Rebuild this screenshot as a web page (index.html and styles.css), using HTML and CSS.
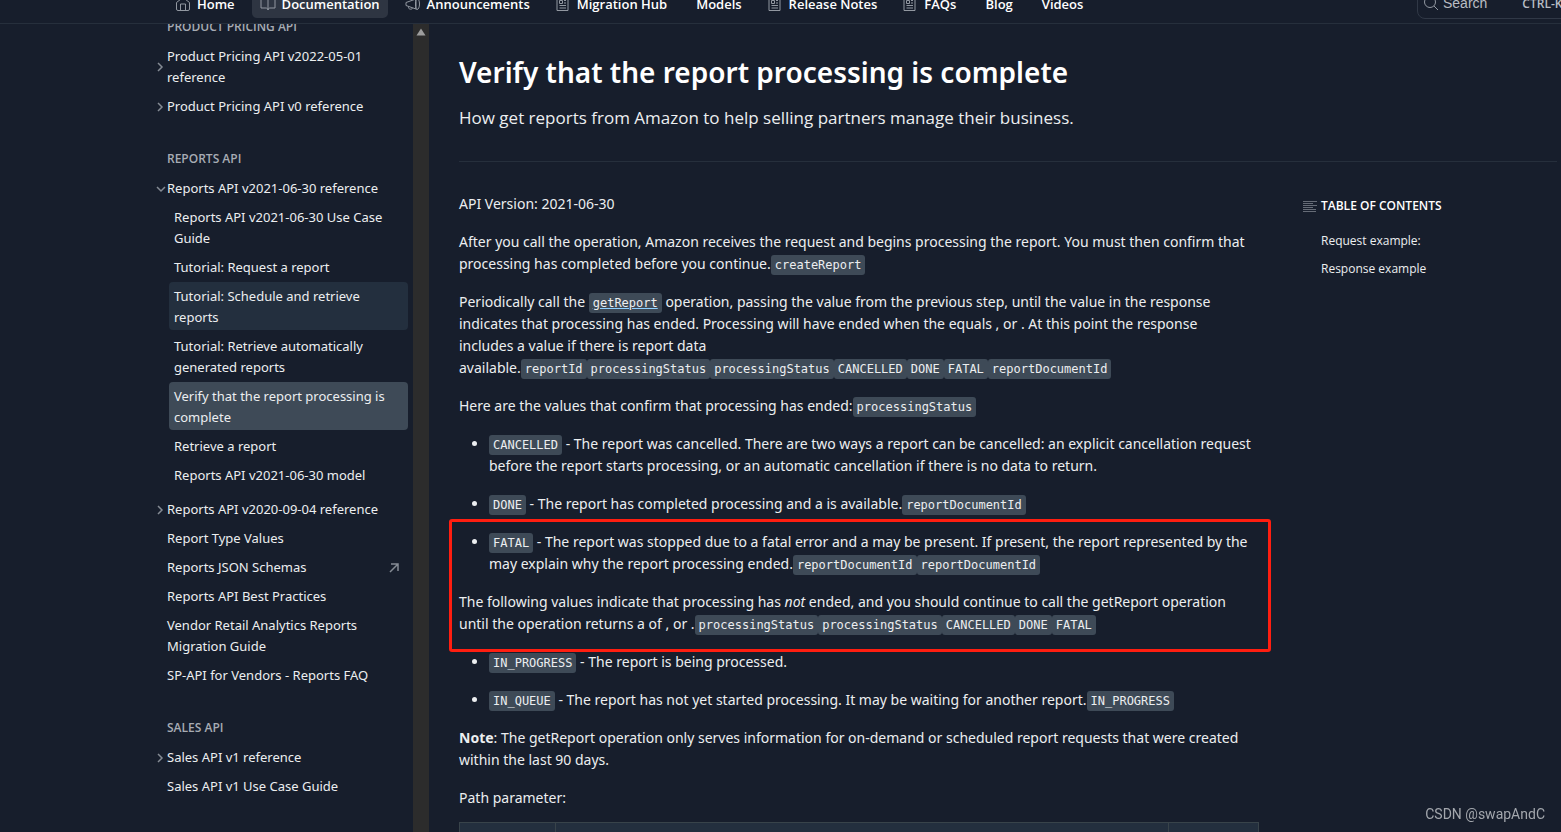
FILE: index.html
```html
<!DOCTYPE html>
<html lang="en">
<head>
<meta charset="utf-8">
<title>Verify that the report processing is complete</title>
<link rel="stylesheet" href="styles.css">
</head>
<body>
<svg class="sprite" aria-hidden="true">
  <symbol id="i-home" viewBox="0 0 16 16"><path d="M1.500 6.500 8 1.500l6.500 5V13a1.500 1.500 0 0 1-1.500 1.500H3A1.500 1.500 0 0 1 1.500 13zM5.500 14.500V8h5v6.500"/></symbol>
  <symbol id="i-book" viewBox="0 0 16 16"><path d="M8 3.500C8 2.500 7 1.500 5.500 1.500H1v10.500h5c1 0 2 .8 2 2 0-1.200 1-2 2-2h5V1.500h-4.500C9 1.500 8 2.500 8 3.500zM8 3.500V14"/></symbol>
  <symbol id="i-horn" viewBox="0 0 16 16"><path d="M1 6.500 11 3v10L1 9.500zM3.500 10.500v1.200c0 1.500 3.500 2.300 4 .3M12 2.500c1.500 0 2.500 2.500 2.500 5.500s-1 5.500-2.500 5.500-1.500-2-1.500-5.500S10.500 2.500 12 2.500z"/></symbol>
  <symbol id="i-doc" viewBox="0 0 16 16"><path d="M2 1.500h11v13H2zM4.500 4.500h3v3h-3zM9 4.500h2M9 7h2M4.500 9.500H11M4.500 12H11"/></symbol>
  <symbol id="i-search" viewBox="0 0 16 16"><circle cx="7" cy="7" r="5.500"/><path d="m11 11 4 4"/></symbol>
  <symbol id="i-right" viewBox="0 0 12 12"><path d="m3 2 4 4-4 4"/></symbol>
  <symbol id="i-down" viewBox="0 0 12 12"><path d="m2 4 4 4 4-4"/></symbol>
  <symbol id="i-out" viewBox="0 0 12 12"><path d="M3 2h7v7M10 2 2 10"/></symbol>
  <symbol id="i-lines" viewBox="0 0 14 12"><path d="M0 1.500h14M0 3.500h10M0 5.500h14M0 7.500h10M0 9.500h13M0 11.500h13"/></symbol>
</svg>

<header class="topbar">
  <nav class="topnav">
    <a class="tab" href="#"><svg class="icon"><use href="#i-home"/></svg>Home</a>
    <a class="tab tab-active" href="#"><svg class="icon"><use href="#i-book"/></svg>Documentation</a>
    <a class="tab" href="#"><svg class="icon"><use href="#i-horn"/></svg>Announcements</a>
    <a class="tab" href="#"><svg class="icon"><use href="#i-doc"/></svg>Migration Hub</a>
    <a class="tab tab-plain" href="#">Models</a>
    <a class="tab" href="#"><svg class="icon"><use href="#i-doc"/></svg>Release Notes</a>
    <a class="tab" href="#"><svg class="icon"><use href="#i-doc"/></svg>FAQs</a>
    <a class="tab tab-plain" href="#">Blog</a>
    <a class="tab tab-plain" href="#">Videos</a>
  </nav>
  <button class="search" type="button"><svg class="icon"><use href="#i-search"/></svg><span>Search</span><kbd class="keys">CTRL-K</kbd></button>
</header>

<div class="page">
  <aside class="sidebar">
    <nav class="tree">
      <h2 class="group">Product Pricing API</h2>
      <ul class="list">
        <li><a class="item" href="#"><svg class="chevron"><use href="#i-right"/></svg><span>Product Pricing API v2022-05-01 reference</span></a></li>
        <li><a class="item" href="#"><svg class="chevron"><use href="#i-right"/></svg><span>Product Pricing API v0 reference</span></a></li>
      </ul>
      <h2 class="group">Reports API</h2>
      <ul class="list">
        <li><a class="item" href="#"><svg class="chevron"><use href="#i-down"/></svg><span>Reports API v2021-06-30 reference</span></a>
          <ul class="sublist">
            <li><a class="subitem" href="#">Reports API v2021-06-30 Use Case Guide</a></li>
            <li><a class="subitem" href="#">Tutorial: Request a report</a></li>
            <li><a class="subitem subitem-hover" href="#">Tutorial: Schedule and retrieve reports</a></li>
            <li><a class="subitem" href="#">Tutorial: Retrieve automatically generated reports</a></li>
            <li><a class="subitem subitem-active" href="#">Verify that the report processing is complete</a></li>
            <li><a class="subitem" href="#">Retrieve a report</a></li>
            <li><a class="subitem" href="#">Reports API v2021-06-30 model</a></li>
          </ul>
        </li>
        <li><a class="item" href="#"><svg class="chevron"><use href="#i-right"/></svg><span>Reports API v2020-09-04 reference</span></a></li>
        <li><a class="item leaf" href="#">Report Type Values</a></li>
        <li><a class="item leaf" href="#">Reports JSON Schemas<svg class="external"><use href="#i-out"/></svg></a></li>
        <li><a class="item leaf" href="#">Reports API Best Practices</a></li>
        <li><a class="item leaf" href="#">Vendor Retail Analytics Reports Migration Guide</a></li>
        <li><a class="item leaf" href="#">SP-API for Vendors - Reports FAQ</a></li>
      </ul>
      <h2 class="group">Sales API</h2>
      <ul class="list">
        <li><a class="item" href="#"><svg class="chevron"><use href="#i-right"/></svg><span>Sales API v1 reference</span></a></li>
        <li><a class="item leaf" href="#">Sales API v1 Use Case Guide</a></li>
      </ul>
    </nav>
    <div class="scrollbar"><svg class="arrow" viewBox="0 0 10 8"><path d="M5 0.500 9.500 7.500H.5z"/></svg></div>
  </aside>

  <main class="main">
    <header class="intro">
      <h1 class="title">Verify that the report processing is complete</h1>
      <p class="lead">How get reports from Amazon to help selling partners manage their business.</p>
    </header>
    <div class="columns">
      <article class="article">
        <p>API Version: 2021-06-30</p>
        <p>After you call the operation, Amazon receives the request and begins processing the report. You must then confirm that processing has completed before you continue.<code>createReport</code></p>
        <p>Periodically call the <a class="ref" href="#"><code>getReport</code></a> operation, passing the value from the previous step, until the value in the response indicates that processing has ended. Processing will have ended when the equals , or . At this point the response<br>includes a value if there is report data <span class="run">available.<code>reportId</code><code>processingStatus</code><code>processingStatus</code><code>CANCELLED</code><code>DONE</code><code>FATAL</code><code>reportDocumentId</code></span></p>
        <p>Here are the values that confirm that processing has ended:<code>processingStatus</code></p>
        <ul class="bullets">
          <li><code>CANCELLED</code> - The report was cancelled. There are two ways a report can be cancelled: an explicit cancellation request before the report starts processing, or an automatic cancellation if there is no data to return.</li>
          <li><code>DONE</code> - The report has completed processing and a is available.<code>reportDocumentId</code></li>
        </ul>
        <div class="marked">
          <ul class="bullets">
            <li><code>FATAL</code> - The report was stopped due to a fatal error and a may be present. If present, the report represented by the may explain why the report processing ended.<code>reportDocumentId</code><code>reportDocumentId</code></li>
          </ul>
          <p>The following values indicate that processing has <em>not</em> ended, and you should continue to call the getReport operation<br>until the operation returns a of , or .<code>processingStatus</code><code>processingStatus</code><code>CANCELLED</code><code>DONE</code><code>FATAL</code></p>
        </div>
        <ul class="bullets">
          <li><code>IN_PROGRESS</code> - The report is being processed.</li>
          <li><code>IN_QUEUE</code> - The report has not yet started processing. It may be waiting for another report.<code>IN_PROGRESS</code></li>
        </ul>
        <p><strong>Note</strong>: The getReport operation only serves information for on-demand or scheduled report requests that were created within the last 90 days.</p>
        <p>Path parameter:</p>
        <table class="params">
          <thead><tr><th class="narrow"></th><th></th><th class="narrow"></th></tr></thead>
        </table>
      </article>
      <nav class="toc">
        <h2 class="toc-title"><svg class="lines"><use href="#i-lines"/></svg>Table of Contents</h2>
        <a class="toc-link" href="#">Request example:</a>
        <a class="toc-link" href="#">Response example</a>
      </nav>
    </div>
  </main>
</div>
<div class="credit">CSDN @swapAndC</div>
</body>
</html>
```
FILE: styles.css
```css
* { box-sizing: border-box; }

body {
  margin: 0;
  height: 100vh;
  overflow: hidden;
  display: flex;
  flex-direction: column;
  background: #171e2c;
  color: #eceef0;
  font-family: "Noto Sans", "Open Sans", sans-serif;
  font-size: 14px;
  line-height: 22px;
}

a { color: inherit; text-decoration: none; }
ul { list-style: none; margin: 0; padding: 0; }
h1, h2, p { margin: 0; }

svg { fill: none; stroke: currentColor; flex: none; }
.sprite { position: absolute; width: 0; height: 0; }

.topbar {
  display: flex;
  align-items: flex-end;
  justify-content: space-between;
  flex: none;
  height: 24px;
  overflow: hidden;
  padding-left: 167px;
  border-bottom: 1px solid #262f3c;
  font-family: "Open Sans", sans-serif;
  white-space: nowrap;
}

.topnav { display: flex; gap: 9px; padding-bottom: 5px; }

.tab {
  display: flex;
  align-items: center;
  gap: 6px;
  height: 28px;
  padding: 0 8px;
  border-radius: 5px;
  color: #fff;
  font-size: 13px;
  font-weight: 600;
}
.tab-plain { padding-left: 12px; }
.tab-active { background: #2e3542; }

.icon { width: 16px; height: 16px; color: #9298a1; }

.search {
  display: flex;
  align-items: center;
  gap: 4px;
  width: 160px;
  height: 32px;
  margin: 0 -16px 4px 0;
  padding: 0 5px;
  border: 1px solid #303846;
  border-radius: 8px;
  background: none;
  color: #b9bdc3;
  font: 14px "Liberation Sans", sans-serif;
}
.keys { margin-left: 31px; font: 600 12px "Open Sans", sans-serif; }

.page { display: flex; flex: 1; min-height: 0; }

.sidebar { display: flex; flex: none; width: 429px; overflow: hidden; }

.tree {
  flex: 1;
  margin-top: -7px;
  padding: 0 5px 0 155px;
  font-size: 13px;
  line-height: 21px;
}

.group {
  margin: 28px 0 5px 12px;
  color: #a7acb4;
  font-family: "Open Sans", sans-serif;
  font-size: 12px;
  font-weight: 600;
  line-height: 20px;
  text-transform: uppercase;
}
.group:first-child { margin-top: 0; }

.item { display: flex; align-items: center; padding: 4px 0; }
.leaf { padding-left: 12px; }
.chevron { width: 12px; height: 12px; color: #858b94; stroke-width: 1.5; }
.external { width: 12px; height: 12px; margin: 0 8px 0 auto; color: #858b94; stroke-width: 1.5; }

.sublist { margin: 0 0 7px 14px; }
.subitem { display: block; margin: 0 0 2px; padding: 4px 5px 2px; border-radius: 4px; }
.subitem-hover { background: #232f3e; }
.subitem-active { background: #3e4a57; }

.scrollbar { width: 16px; padding: 4px 3px; background: #2c2c2c; }
.arrow { display: block; width: 10px; height: 8px; fill: #9d9d9d; stroke: none; }

.main { flex: 1; min-width: 0; padding: 28px 4px 0 30px; }

.intro { padding-bottom: 30px; border-bottom: 1px solid #262f3c; }
.title { color: #fff; font-size: 28px; font-weight: 600; line-height: 40px; }
.lead { margin-top: 13px; font-family: "Open Sans", sans-serif; font-size: 17px; line-height: 26px; }

.columns { display: grid; grid-template-columns: minmax(0, 1fr) 254px; column-gap: 44px; padding-top: 31px; }

.article, .marked { display: flex; flex-direction: column; gap: 16px; }

.bullets {
  display: flex;
  flex-direction: column;
  gap: 16px;
  padding-left: 30px;
  list-style: disc;
}

code {
  padding: 3px 4px;
  border-radius: 3px;
  background: #3e4a57;
  font: 12px/1 "DejaVu Sans Mono", monospace;
}

.ref code { text-decoration: underline; text-decoration-color: #8fd0ff; }
.run { white-space: nowrap; }

.marked { position: relative; }
.marked::after {
  content: "";
  position: absolute;
  inset: -12px -12px -17px -10px;
  border: 3px solid #ff1e10;
  border-radius: 3px;
}

.params { width: 100%; margin-top: -3px; border-collapse: collapse; }
.params th { height: 36px; border: 1px solid #38434a; background: #232f3e; }
.params .narrow { width: 12%; }
.params .narrow:last-child { width: 90px; }

.toc { font-family: "Open Sans", sans-serif; font-size: 12px; line-height: 28px; }
.toc-title {
  display: flex;
  align-items: center;
  gap: 4px;
  margin-bottom: 8px;
  color: #fff;
  font-size: 12px;
  font-weight: 600;
  line-height: 26px;
  text-transform: uppercase;
}
.lines { width: 14px; height: 12px; color: #666c77; }
.toc-link { display: block; padding-left: 18px; }

.credit {
  position: fixed;
  right: 16px;
  bottom: 8px;
  color: #a3a7ad;
  font: 14px/20px Roboto, sans-serif;
}
```
